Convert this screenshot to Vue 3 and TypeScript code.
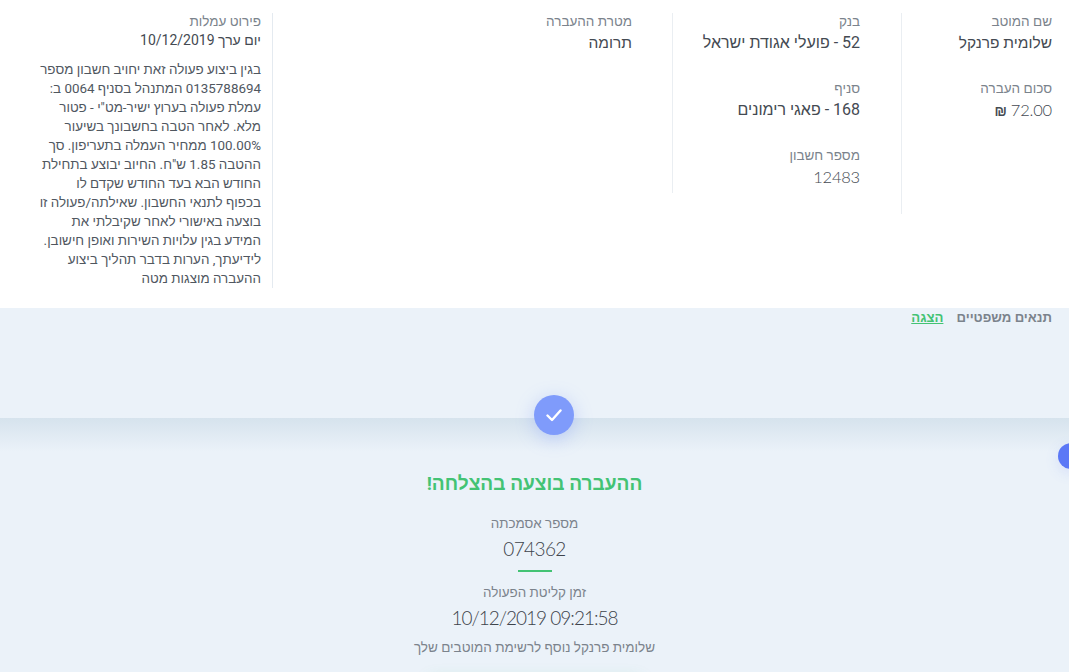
<script setup lang="ts">
const details = [
  'בגין ביצוע פעולה זאת יחויב חשבון מספר',
  '0135788694 המתנהל בסניף 0064 ב:',
  'עמלת פעולה בערוץ ישיר-מט"י - פטור',
  'מלא. לאחר הטבה בחשבונך בשיעור',
  '100.00% ממחיר העמלה בתעריפון. סך',
  'ההטבה 1.85 ש"ח. החיוב יבוצע בתחילת',
  'החודש הבא בעד החודש שקדם לו',
  'בכפוף לתנאי החשבון. שאילתה/פעולה זו',
  'בוצעה באישורי לאחר שקיבלתי את',
  'המידע בגין עלויות השירות ואופן חישובן.',
  'לידיעתך, הערות בדבר תהליך ביצוע',
  'ההעברה מוצגות מטה',
]
</script>

<template>
  <div class="page" dir="rtl">
    <section class="summary">
      <div class="col col-payee">
        <div class="field">
          <div class="label">שם המוטב</div>
          <div class="value short">שלומית פרנקל</div>
        </div>
        <div class="field">
          <div class="label">סכום העברה</div>
          <div class="value amount">72.00 <span class="shekel">₪</span></div>
        </div>
      </div>

      <div class="col col-bank">
        <div class="field">
          <div class="label">בנק</div>
          <div class="value">52 - פועלי אגודת ישראל</div>
        </div>
        <div class="field">
          <div class="label">סניף</div>
          <div class="value">168 - פאגי רימונים</div>
        </div>
        <div class="field">
          <div class="label">מספר חשבון</div>
          <div class="value amount">12483</div>
        </div>
      </div>

      <div class="col col-purpose">
        <div class="field">
          <div class="label">מטרת ההעברה</div>
          <div class="value short">תרומה</div>
        </div>
      </div>

      <div class="col col-fees">
        <div class="label">פירוט עמלות</div>
        <div class="value-date">יום ערך 10/12/2019</div>
        <p class="fee-text">
          <span v-for="line in details" :key="line" class="fee-line">{{ line }}</span>
        </p>
      </div>
    </section>

    <div class="terms">
      <span class="terms-title">תנאים משפטיים</span>
      <a class="terms-link">הצגה</a>
    </div>

    <section class="result">
      <div class="check">
        <svg width="16" height="14" viewBox="0 0 16 14" fill="none">
          <path d="M1.5 7.5 L6 12 L14.5 2.5" stroke="#fff" stroke-width="2.4" stroke-linecap="round" stroke-linejoin="round" />
        </svg>
      </div>
      <h1 class="title">ההעברה בוצעה בהצלחה!</h1>
      <div class="res-label">מספר אסמכתה</div>
      <div class="res-value">074362</div>
      <div class="rule" />
      <div class="res-label">זמן קליטת הפעולה</div>
      <div class="res-value stamp" dir="ltr">10/12/2019 09:21:58</div>
      <div class="note">שלומית פרנקל נוסף לרשימת המוטבים שלך</div>
    </section>

    <div class="side-dot" />
    <div class="fold-glow" />
  </div>
</template>

<style>
html,
body {
  margin: 0;
  overflow: hidden;
  background: #ebf2f9;
}
</style>

<style scoped>
.page {
  position: relative;
  width: 1069px;
  height: 672px;
  overflow: hidden;
  background: #ebf2f9;
  font-family: "Roboto", "Liberation Sans", sans-serif;
  color: #3b4351;
}

.summary {
  display: grid;
  grid-template-columns: 168px 229px 400px 272px;
  height: 308px;
  padding-top: 13px;
  box-sizing: border-box;
  background: #fff;
  align-items: start;
}

.col {
  box-sizing: border-box;
  border-left: 1px solid #eaeef2;
}

.col-payee {
  height: 201px;
  padding-right: 17px;
}

.col-bank {
  height: 180px;
  padding-right: 41px;
}

.col-purpose {
  height: 275px;
  padding-right: 40px;
  border-left: 1px solid #e4eaf0;
}

.col-fees {
  padding-right: 11px;
  border-left: none;
}

.field {
  height: 67px;
}

.label {
  font-size: 13.5px;
  line-height: 17px;
  color: #7b838c;
}

.value {
  margin-top: 3px;
  font-size: 16px;
  line-height: 20px;
  color: #444a52;
}

.short {
  font-size: 15.5px;
}

.amount {
  font-family: "Lato", "Roboto", sans-serif;
  font-size: 16.5px;
  font-weight: 300;
  letter-spacing: -0.2px;
}

.shekel {
  font-family: "Liberation Sans", sans-serif;
  font-size: 14px;
  font-weight: 700;
}

.value-date {
  margin-top: 1px;
  font-size: 14px;
  line-height: 19px;
  color: #444a52;
}

.fee-text {
  margin: 10px 0 0;
  font-size: 13.4px;
  line-height: 19px;
  color: #50575f;
}

.fee-line {
  display: block;
  white-space: nowrap;
}

.terms {
  display: flex;
  gap: 13px;
  height: 110px;
  padding: 1px 17px 0 0;
  box-sizing: border-box;
  font-size: 13.2px;
  line-height: 18px;
  font-weight: 700;
}

.terms-title {
  color: #7b838c;
}

.terms-link {
  color: #43c374;
  text-decoration: underline;
}

.result {
  display: flex;
  flex-direction: column;
  align-items: center;
  height: 254px;
  box-sizing: border-box;
  background: linear-gradient(#d6e3ed, #ebf2f9 34px);
}

.check {
  display: flex;
  align-items: center;
  justify-content: center;
  width: 40px;
  height: 40px;
  margin-top: -23px;
  border-radius: 50%;
  background: #7f9bfb;
  box-shadow: 0 4px 18px rgba(127, 155, 251, 0.4);
  transform: translateX(19px);
}

.title {
  margin: 36px 0 0;
  font-size: 19.1px;
  line-height: 26px;
  font-weight: 700;
  color: #43c374;
}

.res-label {
  margin-top: 18px;
  font-size: 13.4px;
  line-height: 18px;
  color: #7b838c;
}

.res-value {
  margin-top: 4px;
  font-family: "Lato", "Roboto", sans-serif;
  font-size: 19px;
  font-weight: 300;
  letter-spacing: -0.6px;
  line-height: 24px;
  color: #3d434b;
}

.stamp {
  letter-spacing: -1px;
}

.rule {
  width: 34px;
  height: 2px;
  margin-top: 9px;
  background: #43c374;
}

.rule + .res-label {
  margin-top: 12px;
}

.note {
  margin-top: 8px;
  font-size: 13.5px;
  line-height: 18px;
  color: #7b838c;
}

.side-dot {
  position: absolute;
  top: 443px;
  left: 1058px;
  width: 26px;
  height: 26px;
  border-radius: 50%;
  background: #5b78f6;
  box-shadow: 0 4px 14px rgba(91, 120, 246, 0.15);
}

.fold-glow {
  position: absolute;
  top: 680px;
  left: 430px;
  width: 210px;
  height: 40px;
  box-shadow: 0 0 16px rgba(67, 195, 116, 0.25);
}
</style>
